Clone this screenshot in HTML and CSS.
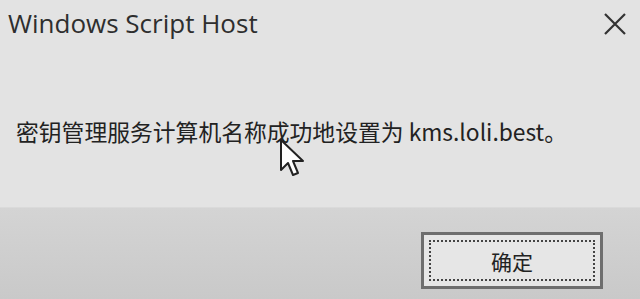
FILE: index.html
```html
<!DOCTYPE html>
<html>
<head>
<meta charset="utf-8">
<link rel="stylesheet" href="styles.css">
</head>
<body>
<div class="dialog">
  <div class="titlebar">
    <span class="title">Windows Script Host</span>
    <span class="close">
      <svg width="24" height="24" viewBox="0 0 24 24"><path d="M2 2 L22 22 M22 2 L2 22" stroke="#333" stroke-width="2.2" fill="none"/></svg>
    </span>
  </div>
  <div class="content">
    <p class="message">密钥管理服务计算机名称成功地设置为 kms.loli.best。</p>
    <svg class="cursor" width="28" height="42" viewBox="0 0 28 42"><path d="M2 2 L2 32 L9 25 L14 37 L19 35 L14 23 L24 23 Z" fill="#fff" stroke="#222" stroke-width="2" stroke-linejoin="round"/></svg>
  </div>
  <div class="footer">
    <button class="btn"><span class="focus">确定</span></button>
  </div>
</div>
</body>
</html>
```
FILE: styles.css
```css
html, body {
  margin: 0;
  padding: 0;
  width: 640px;
  height: 299px;
  overflow: hidden;
}
.dialog {
  width: 640px;
  height: 299px;
  display: flex;
  flex-direction: column;
  background: #e3e3e3;
  font-family: "Open Sans", "Noto Sans CJK SC", sans-serif;
}
.titlebar {
  height: 50px;
  display: flex;
  align-items: center;
  justify-content: space-between;
  padding: 0 13px 0 8px;
}
.title {
  font-size: 26px;
  color: #2e2e2e;
  letter-spacing: 0;
  margin-top: -4px;
}
.close {
  display: flex;
  margin-top: -2px;
}
.content {
  height: 157px;
  position: relative;
}
.message {
  margin: 0;
  padding: 67px 0 0 16px;
  font-size: 22.8px;
  color: #222;
  font-family: "Noto Sans CJK SC", sans-serif;
  line-height: 30px;
}
.cursor {
  position: absolute;
  left: 279px;
  top: 88px;
}
.footer {
  flex: 1;
  background: linear-gradient(#d4d4d4, #c9c9c9);
  border-top: 1px solid #dadada;
  display: flex;
  justify-content: flex-end;
  align-items: flex-start;
  padding: 24px 37px 0 0;
}
.btn {
  width: 182px;
  height: 57px;
  border: 3px solid #6e6e6e;
  background: #e6e6e6;
  padding: 5px;
  box-sizing: border-box;
  display: flex;
}
.focus {
  flex: 1;
  border: 2px dotted #444;
  display: flex;
  align-items: center;
  justify-content: center;
  font-family: "Noto Sans CJK SC", sans-serif;
  font-size: 21px;
  color: #222;
}
```
